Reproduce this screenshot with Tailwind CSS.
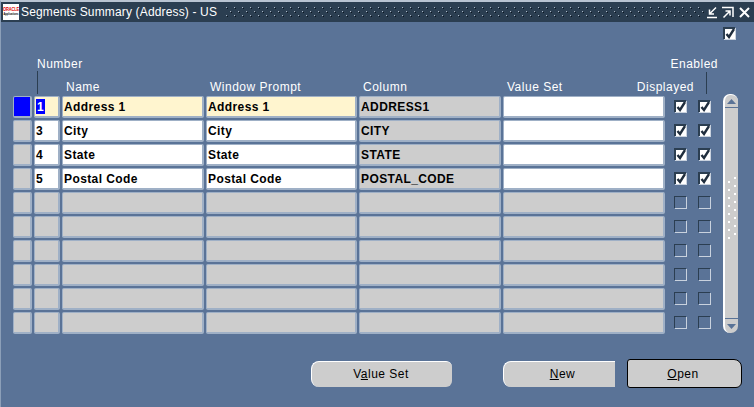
<!DOCTYPE html>
<html lang="en">
<head>
  <meta charset="UTF-8">
  <title>Segments Summary (Address) - US</title>
  <script src="https://cdn.jsdelivr.net/npm/@tailwindcss/browser@4"></script>
</head>
<body class="bg-[#5a7397] font-['Liberation_Sans',sans-serif] overflow-hidden">
  <div class="w-[754px] h-[407px] flex flex-col bg-[#5a7397] border-l border-[#8c9fb8] border-t-2 border-t-[#b9c4d2]">
    <!-- title bar -->
    <div class="h-[20px] shrink-0 flex items-center bg-[#2b3e51] pl-[2px] pr-[2px]">
      <div class="w-[16px] h-[16px] bg-white flex flex-col items-center overflow-hidden leading-none shrink-0">
        <span class="text-[4px] font-bold text-[#e00000] mt-[3px] tracking-[-0.15px] scale-y-[1.5]">ORACLE</span>
        <span class="text-[2.5px] font-bold text-black mt-[3px] scale-y-[1.4]">Applications</span>
      </div>
      <span class="ml-[2px] text-[12px] text-white tracking-[0.15px] whitespace-nowrap">Segments Summary (Address) - US</span>
      <svg class="ml-[9px] flex-1 h-[10px]" height="10">
        <defs>
          <pattern id="dots" width="8" height="8" patternUnits="userSpaceOnUse">
            <rect x="0" y="0" width="1" height="1" fill="#aab6c4"/><rect x="1" y="1" width="1" height="1" fill="#0d1722"/>
            <rect x="4" y="4" width="1" height="1" fill="#aab6c4"/><rect x="5" y="5" width="1" height="1" fill="#0d1722"/>
          </pattern>
        </defs>
        <rect width="100%" height="10" fill="url(#dots)"/>
      </svg>
      <div class="flex items-center gap-[4px] ml-[1px] mr-[1px]">
        <svg width="12" height="13" viewBox="0 0 12 13" fill="none" stroke="white" stroke-width="1.5"><path d="M10 1.500 4 7.500M3.500 3.500V8H8M1 11.500h10"/></svg>
        <svg width="12" height="13" viewBox="0 0 12 13" fill="none" stroke="white" stroke-width="1.5"><path d="M1.500 11.500 7.500 5.500M3.500 5H8v4.500M0 1.500h11V11"/></svg>
        <svg width="13" height="13" viewBox="0 0 13 13" fill="none" stroke="white" stroke-width="2"><path d="M2 2 11 11M11 2 2 11"/></svg>
      </div>
    </div>

    <!-- top check -->
    <div class="h-[35px] shrink-0 flex justify-end items-start pt-[5px] pr-[19px]" id="top-check"></div>

    <div class="flex pl-[12px]">
      <div>
        <!-- headers -->
        <div class="grid grid-cols-[19px_26px_142px_151px_142px_169px_22px_22px] gap-x-[2px] h-[39px] text-[12px] text-white tracking-[0.5px] leading-none">
          <div class="col-start-2 row-span-2 flex flex-col">
            <span class="ml-[3px] mt-[1px] whitespace-nowrap">Number</span>
            <span class="ml-[3px] mt-[1px] mb-[2px] w-px flex-1 bg-[#2b3e51]"></span>
          </div>
          <span class="col-start-3 row-start-2 pl-[4px] self-end pb-[3px]">Name</span>
          <span class="col-start-4 row-start-2 pl-[4px] self-end pb-[3px]">Window Prompt</span>
          <span class="col-start-5 row-start-2 pl-[4px] self-end pb-[3px]">Column</span>
          <span class="col-start-6 row-start-2 pl-[4px] self-end pb-[3px]">Value Set</span>
          <span class="col-start-6 col-span-2 row-start-2 justify-self-end self-end pb-[3px] mr-[2px]">Displayed</span>
          <div class="col-start-8 row-span-2 row-start-1 flex flex-col items-start relative">
            <span class="absolute right-[2px] top-[1px] whitespace-nowrap">Enabled</span>
            <span class="ml-[8px] mt-[15px] mb-[2px] w-px flex-1 bg-[#2b3e51]"></span>
          </div>
        </div>
        <div id="rows" class="grid grid-cols-[19px_26px_142px_151px_142px_169px_22px_22px] gap-x-[2px] gap-y-[2px] auto-rows-[22px] text-[12px] font-bold text-black tracking-[0.4px] leading-none"></div>
      </div>

      <!-- scrollbar -->
      <div class="ml-[3px] mt-[37px] w-[15px] h-[239px] flex flex-col bg-[#cdcdcd] rounded-t-[7px] rounded-b-[7px] border-l-2 border-t border-l-white border-t-white">
        <div class="h-[13px] shrink-0 border-b border-b-[#5a7397] flex items-center justify-center">
          <svg width="9" height="5"><path d="M4.500 0 9 5H0z" fill="#5a7397"/></svg>
        </div>
        <div class="flex-1 flex items-center justify-center pb-[10px]">
          <svg width="8" height="62">
            <defs>
              <pattern id="grip" width="8" height="8" patternUnits="userSpaceOnUse">
                <rect x="0" y="4" width="2" height="2" fill="white"/><rect x="6" y="0" width="2" height="2" fill="white"/>
              </pattern>
            </defs>
            <rect width="8" height="62" fill="url(#grip)"/>
          </svg>
        </div>
        <div class="h-[15px] shrink-0 border-t border-t-[#5a7397] flex items-center justify-center">
          <svg width="9" height="5"><path d="M0 0H9L4.500 5z" fill="#5a7397"/></svg>
        </div>
      </div>
    </div>

    <!-- buttons -->
    <div class="flex justify-end items-center mt-[25px] text-[12px] text-black tracking-[0.5px] leading-none pr-[12px]">
      <button class="w-[141px] h-[26px] bg-[#cdcdcd] rounded-l-[8px] rounded-r-[6px] border-l border-t border-l-white border-t-white pr-[2px]">V<u>a</u>lue Set</button>
      <button class="ml-[51px] w-[112px] h-[26px] bg-[#cdcdcd] rounded-l-[8px] border-l border-t border-l-white border-t-white pl-[6px]"><u>N</u>ew</button>
      <button class="ml-[12px] w-[115px] h-[29px] bg-[#cdcdcd] rounded-tr-[8px] rounded-br-[6px] rounded-l-[3px] border border-black pr-[3px]"><u>O</u>pen</button>
    </div>
  </div>

  <script>
    const check = `<svg width="10" height="10" viewBox="0 0 10 10" fill="none" stroke="#1f2d3d" stroke-width="2.4"><path d="M1.500 5 4 8 9 0"/></svg>`;

    function checkbox(on) {
      if (on) {
        return `<div class="w-[12px] h-[12px] bg-white border-l-2 border-t-2 border-[#2b3e51] shadow-[1px_1px_0_#c9d2de] flex items-center justify-center overflow-hidden">${check}</div>`;
      }
      return `<div class="w-[12px] h-[12px] border-l border-t border-[#2b3e51] shadow-[1px_1px_0_#c9d2de]"></div>`;
    }

    document.getElementById('top-check').innerHTML = checkbox(true);

    const segments = [
      ['1', 'Address 1', 'Address 1', 'ADDRESS1'],
      ['3', 'City', 'City', 'CITY'],
      ['4', 'State', 'State', 'STATE'],
      ['5', 'Postal Code', 'Postal Code', 'POSTAL_CODE'],
      [], [], [], [], [], []
    ];

    const bevel = 'h-[22px] rounded-[2px] border border-[#9fb0c6] border-b-2 border-r-2 flex items-center pl-[1px] overflow-hidden whitespace-nowrap';
    const grey = 'bg-[#cdcdcd]';
    const white = 'bg-white';
    const yellow = 'bg-[#fff5cf]';

    const html = segments.map((seg, i) => {
      const live = seg.length > 0;
      const cur = i === 0;
      const entry = !live ? grey : cur ? yellow : white;
      return `
        <div class="${bevel} ${cur ? 'bg-[#0000ff]' : grey}"></div>
        <div class="${bevel} ${entry}">${cur ? `<span class="bg-[#0000ff] text-white px-px h-[15px] flex items-center">${seg[0]}</span>` : (seg[0] || '')}</div>
        <div class="${bevel} ${entry}">${seg[1] || ''}</div>
        <div class="${bevel} ${entry}">${seg[2] || ''}</div>
        <div class="${bevel} ${grey}">${seg[3] || ''}</div>
        <div class="flex"><div class="${bevel} ${live ? white : grey} w-[162px]"></div></div>
        <div class="flex items-center pb-[2px]">${checkbox(live)}</div>
        <div class="flex items-center pb-[2px]">${checkbox(live)}</div>`;
    }).join('');
    document.getElementById('rows').innerHTML = html;
  </script>
</body>
</html>
